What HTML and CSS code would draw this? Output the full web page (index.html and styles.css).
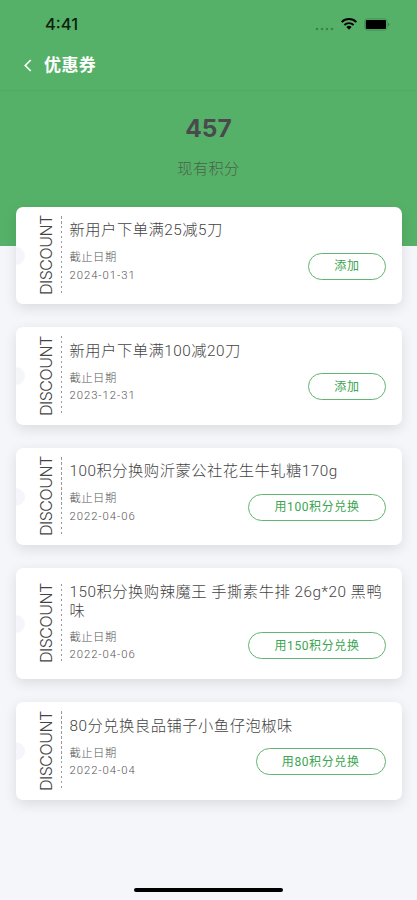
FILE: index.html
```
<!DOCTYPE html>
<html lang="zh-CN">
<head>
<meta charset="utf-8">
<meta name="viewport" content="width=device-width, initial-scale=1">
<title>优惠券</title>
<link rel="stylesheet" href="styles.css">
</head>
<body>
<div class="screen">
  <header class="top">
    <div class="status">
      <span class="clock">4:41</span>
      <div class="indicators">
        <svg class="signal" width="20" height="4" viewBox="0 0 20 4"><circle cx="2" cy="2" r="1.3"/><circle cx="7" cy="2" r="1.3"/><circle cx="12" cy="2" r="1.3"/><circle cx="17" cy="2" r="1.3"/></svg>
        <svg class="wifi" width="16" height="12" viewBox="0 0 16 12"><path d="M.7 4.1a10.4 10.4 0 0 1 14.6 0" fill="none" stroke="#000" stroke-width="2"/><path d="M3.4 7a6.5 6.5 0 0 1 9.2 0" fill="none" stroke="#000" stroke-width="1.9"/><path d="M5.4 9.1a3.7 3.7 0 0 1 5.2 0L8 11.8z"/></svg>
        <svg class="battery" width="27" height="13" viewBox="0 0 27 13"><rect x=".7" y=".9" width="22.4" height="11.2" rx="2.5" fill="none" stroke="#3c8c4a" stroke-width=".8"/><rect x="1.8" y="2" width="20.2" height="9" rx="1"/><path d="M24.3 4.8q2.2 1.7 0 3.6z" fill="#2c7337"/></svg>
      </div>
    </div>
    <nav class="nav">
      <svg class="back" width="8" height="13" viewBox="0 0 8 13"><path d="M6.8 1 1.3 6.5 6.8 12" fill="none" stroke="#fff" stroke-width="1.7"/></svg>
      <h1>优惠券</h1>
    </nav>
    <div class="points"><strong>457</strong><span>现有积分</span></div>
  </header>
  <main class="coupons">
    <article class="coupon">
      <div class="stub"><span>DISCOUNT</span></div>
      <div class="body"><h2>新用户下单满25减5刀</h2><div class="row"><div class="expiry"><p>截止日期</p><p class="date">2024-01-31</p></div><button>添加</button></div></div>
    </article>
    <article class="coupon">
      <div class="stub"><span>DISCOUNT</span></div>
      <div class="body"><h2>新用户下单满100减20刀</h2><div class="row"><div class="expiry"><p>截止日期</p><p class="date">2023-12-31</p></div><button>添加</button></div></div>
    </article>
    <article class="coupon">
      <div class="stub"><span>DISCOUNT</span></div>
      <div class="body"><h2>100积分换购沂蒙公社花生牛轧糖170g</h2><div class="row"><div class="expiry"><p>截止日期</p><p class="date">2022-04-06</p></div><button>用100积分兑换</button></div></div>
    </article>
    <article class="coupon tall">
      <div class="stub"><span>DISCOUNT</span></div>
      <div class="body"><h2>150积分换购辣魔王 手撕素牛排 26g*20 黑鸭味</h2><div class="row"><div class="expiry"><p>截止日期</p><p class="date">2022-04-06</p></div><button>用150积分兑换</button></div></div>
    </article>
    <article class="coupon">
      <div class="stub"><span>DISCOUNT</span></div>
      <div class="body"><h2>80分兑换良品铺子小鱼仔泡椒味</h2><div class="row"><div class="expiry"><p>截止日期</p><p class="date">2022-04-04</p></div><button>用80积分兑换</button></div></div>
    </article>
  </main>
  <div class="home"></div>
</div>
</body>
</html>
```
FILE: styles.css
```
* { box-sizing: border-box; margin: 0; padding: 0; }
body { font-family: Roboto, "Noto Sans CJK SC", sans-serif; background: #f4f6fa; color: #555; }
.screen { height: 900px; display: flex; flex-direction: column; overflow: hidden; }
.top { height: 246px; flex: none; background: #56b168; }
.status { height: 48px; padding: 0 26px 0 45px; display: flex; align-items: center; justify-content: space-between; }
.clock { font: 500 16.5px/20px Inter, sans-serif; color: #10200f; }
.indicators { display: flex; align-items: center; }
.signal { fill: #3c8349; margin: 9px 6px 0 0; }
.wifi { margin-right: 7px; }
.nav { height: 42px; padding: 0 24px 8px; display: flex; align-items: center; gap: 12px; box-shadow: 0 1px 1px rgba(0, 60, 0, .06); }
.nav h1 { font-size: 17px; line-height: 24px; font-weight: 700; letter-spacing: .4px; color: #fff; }
.points { display: flex; flex-direction: column; align-items: center; padding-top: 23px; }
.points strong { font: 700 24.5px/30px Inter, sans-serif; color: #4a4a4e; }
.points span { font-size: 15.2px; line-height: 24px; font-weight: 300; letter-spacing: .4px; margin-top: 14px; color: #48634b; }
.coupons { margin-top: -39.5px; padding: 0 15.5px 0 16px; display: flex; flex-direction: column; gap: 23px; }
.coupon { height: 97.5px; display: flex; background: #fff; border-radius: 7px; box-shadow: 0 4px 13px rgba(0, 0, 0, .11); position: relative; }
.coupon.tall { height: 111px; }
.coupon::before { content: ""; position: absolute; left: 0; top: calc(50% - 8.5px); width: 9px; height: 18px; border-radius: 0 9px 9px 0; background: #f4f6fa; }
.stub { width: 46px; padding-left: 14px; display: flex; align-items: center; justify-content: center; align-self: center; height: 79px; background: repeating-linear-gradient(#999 0 2.5px, transparent 2.5px 5px) right / 1px 100% no-repeat; }
.stub span { writing-mode: vertical-rl; transform: rotate(180deg); font: 300 16px/20px Inter, sans-serif; letter-spacing: -.45px; color: #444; }
.body { flex: 1; padding: 14.5px 16px 0 7.5px; min-width: 0; }
h2 { font-size: 15.3px; line-height: 19px; font-weight: 300; letter-spacing: .5px; color: #444; margin-right: -6px; }
.row { display: flex; justify-content: space-between; align-items: flex-start; margin-top: 9px; }
.tall .row { margin-top: 8px; }
.expiry { font-size: 11.3px; line-height: 17.5px; font-weight: 300; letter-spacing: .5px; }
.expiry .date { letter-spacing: .95px; }
button { height: 27px; margin-top: 3.5px; padding: 0 25px; border: 1px solid #61b471; border-radius: 14px; background: #fff; color: #3ba550; font: 400 12px/20px Roboto, "Noto Sans CJK SC", sans-serif; letter-spacing: .6px; }
.home { width: 149px; height: 4px; border-radius: 2px; background: #000; margin: auto auto 8px; }
```
